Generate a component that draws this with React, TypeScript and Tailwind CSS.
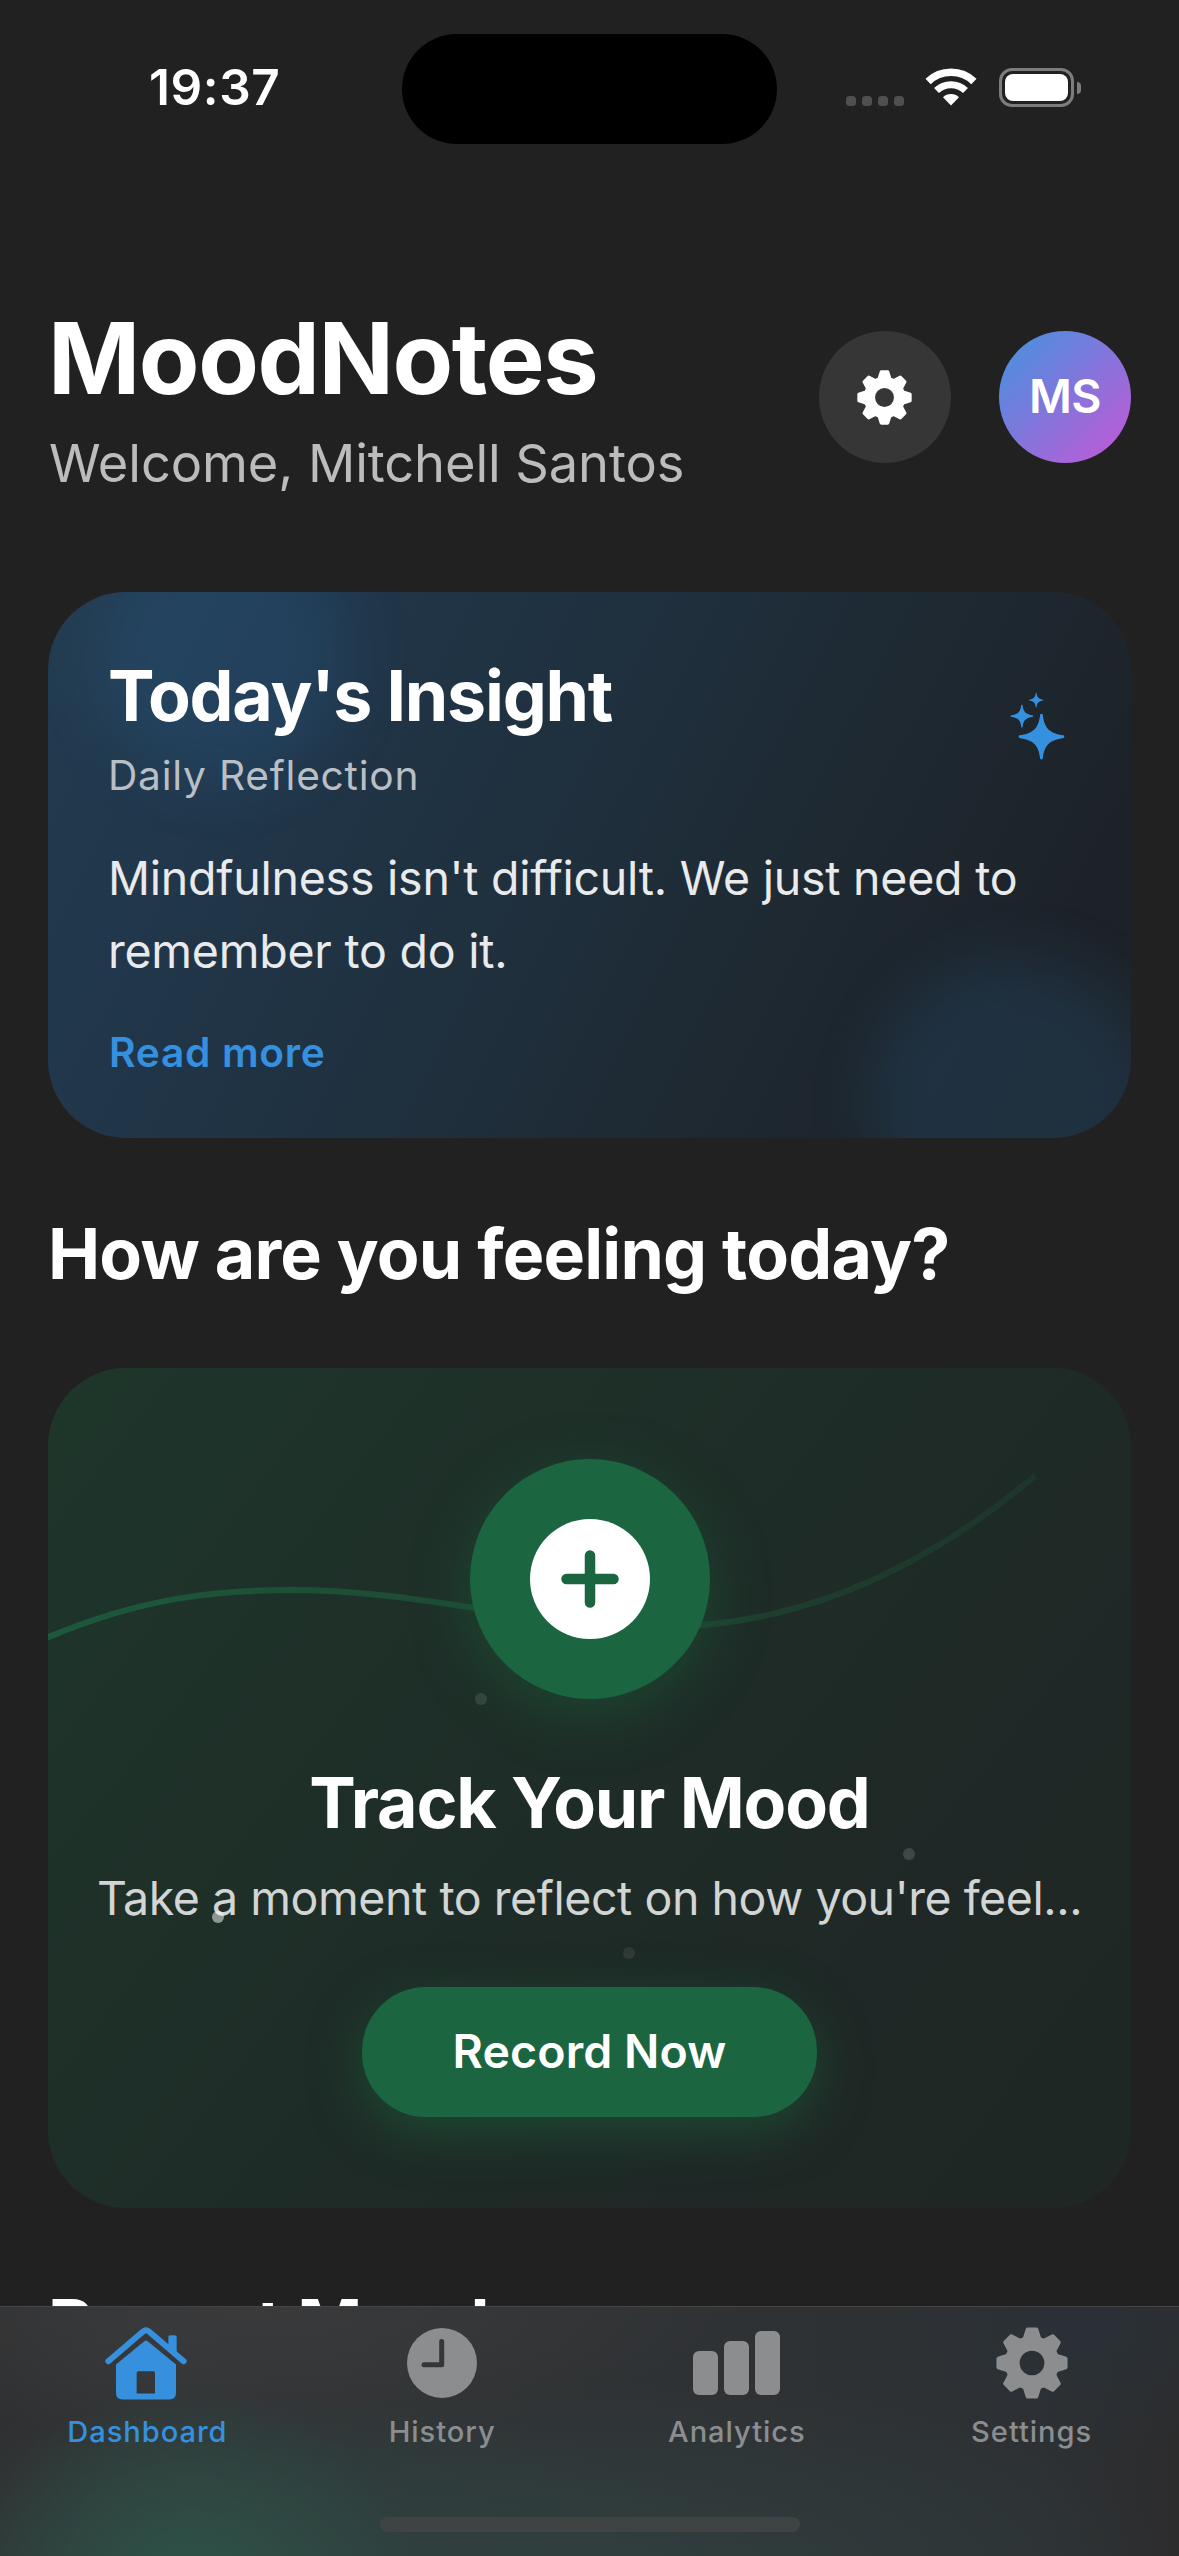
import type { ReactNode } from "react";

const TOOTH_ANGLES = [0, 45, 90, 135, 180, 225, 270, 315];
const STAR =
  "M-4 -67 Q0 -71 4 -67 C8 -25 25 -10 67 -4 Q71 0 67 4 C25 10 8 25 4 67 Q0 71 -4 67 C-8 25 -25 10 -67 4 Q-71 0 -67 -4 C-25 -10 -8 -25 -4 -67Z";

function GearIcon({ className }: { className: string }) {
  return (
    <svg viewBox="-83 -83 166 166" className={className}>
      <circle r="45.5" fill="none" stroke="currentColor" strokeWidth="34" />
      {TOOTH_ANGLES.map((a) => (
        <path
          key={a}
          d="M-18 -52 L-10 -77.5 L10 -77.5 L18 -52Z"
          transform={`rotate(${a})`}
          fill="currentColor"
          stroke="currentColor"
          strokeWidth="9"
          strokeLinejoin="round"
        />
      ))}
    </svg>
  );
}

function SparklesIcon() {
  return (
    <svg viewBox="148 97 166 204" className="mt-[38px] h-[68px] w-[55px] text-[#3690e0]" fill="currentColor">
      <path d={STAR} transform="translate(243 231)" />
      <path d={STAR} transform="translate(184 169) scale(0.5)" />
      <path d={STAR} transform="translate(227 121) scale(0.32)" />
    </svg>
  );
}

function HouseIcon() {
  return (
    <svg viewBox="44 50 246 218" className="mr-[3px] h-[73px] w-[82px]">
      <path
        d="M54 152 L158 63 Q167 56 176 63 L280 152"
        fill="none"
        stroke="currentColor"
        strokeWidth="18"
        strokeLinecap="round"
        strokeLinejoin="round"
      />
      <path d="M234 112 V80 Q234 74 240 74 H253 Q259 74 259 80 V132Z" fill="currentColor" />
      <path
        fillRule="evenodd"
        fill="currentColor"
        d="M162 92 Q167 88 172 92 L257 162 V247 Q257 267 237 267 H97 Q77 267 77 247 V162Z M144 182 Q139 182 139 187 V249 H194 V187 Q194 182 189 182Z"
      />
    </svg>
  );
}

function ClockIcon() {
  return (
    <svg viewBox="0 0 70 70" className="size-[70px]">
      <mask id="clock-hands">
        <rect width="70" height="70" fill="white" />
        <path d="M34.7 13.5 V36.7 H17" fill="none" stroke="black" strokeWidth="5" strokeLinecap="round" strokeLinejoin="round" />
      </mask>
      <circle cx="35" cy="35" r="35" fill="currentColor" mask="url(#clock-hands)" />
    </svg>
  );
}

function BarsIcon() {
  return (
    <div className="flex h-16 items-end gap-[6px]">
      <div className="h-11 w-[25px] rounded-[6px] bg-current" />
      <div className="h-[54px] w-[25px] rounded-[6px] bg-current" />
      <div className="h-16 w-[25px] rounded-[6px] bg-current" />
    </div>
  );
}

function WifiIcon() {
  return (
    <svg viewBox="-26 -37.5 52 38" className="mb-px h-[38px] w-[52px] text-white">
      <path d="M-22.9 -24.1 A33.2 33.2 0 0 1 22.9 -24.1" fill="none" stroke="currentColor" strokeWidth="7.6" />
      <path d="M-14.5 -14.9 A20.8 20.8 0 0 1 14.5 -14.9" fill="none" stroke="currentColor" strokeWidth="7" />
      <path d="M0 0 L-8 -8.2 A11.6 11.6 0 0 1 8 -8.2Z" fill="currentColor" />
    </svg>
  );
}

function StatusBar() {
  return (
    <div className="flex h-[178px] items-center">
      <div className="w-[402px] pb-[2px] pl-[149px] text-[49.5px] leading-none font-semibold tracking-[0.6px]">19:37</div>
      <div className="h-[110px] w-[375px] rounded-full bg-black" />
      <div className="mb-[3px] ml-[69px] flex h-[39px] items-end">
        <div className="mb-px flex gap-[6px]">
          <div className="size-[10px] rounded-[3.5px] bg-[#4f4f4f]" />
          <div className="size-[10px] rounded-[3.5px] bg-[#4f4f4f]" />
          <div className="size-[10px] rounded-[3.5px] bg-[#4f4f4f]" />
          <div className="size-[10px] rounded-[3.5px] bg-[#4f4f4f]" />
        </div>
        <div className="mr-[22px] ml-[21px]">
          <WifiIcon />
        </div>
        <div className="flex items-center gap-[3px]">
          <div className="h-[39px] w-[75px] rounded-[13px] border-3 border-[#7d7d7d] p-[3px]">
            <div className="h-full rounded-[8px] bg-white" />
          </div>
          <div className="h-3 w-1 rounded-r-full bg-[#7d7d7d]" />
        </div>
      </div>
    </div>
  );
}

function InsightCard() {
  return (
    <section className="relative mt-24 h-[546px] overflow-hidden rounded-[78px] bg-[linear-gradient(117deg,#233c50_0%,#21374b_18%,#1f303e_45%,#1e2830_70%,#1d2229_88%,#1d2228_100%)]">
      <div className="absolute -top-[66px] left-[44px] size-[260px] rounded-full bg-[#2f8fdd]/12 blur-[30px]" />
      <div className="absolute top-[366px] left-[822px] size-[290px] rounded-full bg-[#2f8fdd]/13 blur-[30px]" />
      <div className="relative pt-[62px] pr-[66px] pl-[60px]">
        <div className="flex h-[147px] justify-between">
          <div>
            <h2 className="text-[69.8px] leading-[84px] font-bold tracking-[-1.2px]">Today's Insight</h2>
            <p className="mt-3 text-[40.7px] leading-[51px] tracking-[0.75px] text-[#b9bfc5]">Daily Reflection</p>
          </div>
          <SparklesIcon />
        </div>
        <p className="mt-[41px] text-[46.5px] leading-[73px] tracking-[-0.24px] text-[#e8eaec]">
          Mindfulness isn't difficult. We just need to
          <br />
          remember to do it.
        </p>
        <p className="mt-[39px] ml-px text-[40.7px] leading-[51px] font-semibold tracking-[0.7px] text-[#3690e0]">Read more</p>
      </div>
    </section>
  );
}

function MoodCard() {
  return (
    <section className="relative mt-[72px] h-[840px] overflow-hidden rounded-[78px] bg-[linear-gradient(128deg,#1e362b_0%,#1e3129_25%,#1e2c27_50%,#1f2826_75%,#1f2725_100%)]">
      <svg viewBox="48 1368 1083 840" className="absolute inset-0 h-full w-full">
        <defs>
          <linearGradient id="wave" gradientUnits="userSpaceOnUse" x1="48" y1="0" x2="1034" y2="0">
            <stop offset="0" stopColor="#1c6740" stopOpacity="0.72" />
            <stop offset="1" stopColor="#1c6740" stopOpacity="0.18" />
          </linearGradient>
        </defs>
        <path
          d="M44 1639 C140 1598 215 1590 290 1590 C355 1590 410 1598 475 1608 S610 1630 690 1626 C832 1617 945 1551 1035 1476"
          fill="none"
          stroke="url(#wave)"
          strokeWidth="6"
        />
      </svg>
      <div className="relative flex flex-col items-center pt-[91px]">
        <div className="flex size-60 items-center justify-center rounded-full bg-[#1b6641] shadow-[0_15px_60px_rgba(27,102,62,0.45)]">
          <div className="flex size-[120px] items-center justify-center rounded-full bg-white">
            <svg viewBox="0 0 58 58" className="size-[58px]">
              <path d="M29 5.5 V52.5 M5.5 29 H52.5" stroke="#1b6641" strokeWidth="10.5" strokeLinecap="round" />
            </svg>
          </div>
        </div>
        <h2 className="mt-[62px] text-[69.8px] leading-[84px] font-bold tracking-[-1.17px]">Track Your Mood</h2>
        <p className="mt-6 text-[46.5px] leading-[58px] tracking-[-0.45px] whitespace-nowrap text-[#d2d5d4]">
          Take a moment to reflect on how you're feel...
        </p>
        <button className="mt-[60px] h-[130px] w-[455px] rounded-[64px] bg-[#1b6641] text-[46.5px] font-semibold tracking-[0.1px] shadow-[0_15px_50px_rgba(27,102,62,0.5)]">
          Record Now
        </button>
      </div>
      <div className="absolute top-[325px] left-[427px] size-3 rounded-full bg-white/10" />
      <div className="absolute top-[480px] left-[855px] size-3 rounded-full bg-white/15" />
      <div className="absolute top-[543px] left-[164px] size-3 rounded-full bg-white/50" />
      <div className="absolute top-[579px] left-[575px] size-3 rounded-full bg-white/8" />
    </section>
  );
}

function Tab({ label, active, children }: { label: string; active?: boolean; children: ReactNode }) {
  return (
    <div className={active ? "flex flex-1 flex-col items-center text-[#3690de]" : "flex flex-1 flex-col items-center text-[#8b8d8f]"}>
      <div className="flex h-[72px] items-center justify-center">{children}</div>
      <span className="mt-[13px] text-[29.1px] leading-10 font-medium tracking-[0.95px]">{label}</span>
    </div>
  );
}

export default function App() {
  return (
    <div className="flex h-[2556px] w-[1179px] flex-col overflow-hidden bg-[#212121] font-['Inter',sans-serif] text-white">
      <div className="h-[2306px] overflow-hidden">
        <StatusBar />
        <main className="mt-[120px] px-12">
          <header className="flex h-[198px] items-center">
            <div className="h-[198px] flex-1">
              <h1 className="text-[99px] leading-[120px] font-bold tracking-[-1.4px]">MoodNotes</h1>
              <p className="mt-[13px] ml-px text-[52.4px] leading-[64px] tracking-[-0.1px] text-[#bcbcbc]">Welcome, Mitchell Santos</p>
            </div>
            <div className="mr-12 flex size-[132px] items-center justify-center rounded-full bg-[#363636]">
              <GearIcon className="mr-px size-[55px] text-white" />
            </div>
            <div className="flex size-[132px] items-center justify-center rounded-full bg-[linear-gradient(135deg,#4194df_0%,#c656d7_100%)] text-[46.5px] font-semibold tracking-[-0.5px]">
              MS
            </div>
          </header>
          <InsightCard />
          <h2 className="mt-[74px] text-[69.8px] leading-[84px] font-bold tracking-[-0.8px]">How are you feeling today?</h2>
          <MoodCard />
          <h2 className="mt-[75px] text-[69.8px] leading-[84px] font-bold tracking-[-0.8px]">Recent Moods</h2>
        </main>
      </div>
      <nav className="h-[250px] border-t border-[#454545] bg-[radial-gradient(ellipse_230px_190px_at_190px_275px,#2d5348_0%,#2d534880_45%,#2d534800_100%),radial-gradient(ellipse_480px_180px_at_260px_270px,#2f413f_0%,#2f413f00_100%),radial-gradient(ellipse_500px_130px_at_250px_0px,#3a3a3b_0%,#3a3a3b00_100%),radial-gradient(ellipse_600px_200px_at_580px_270px,#303f3f_0%,#303f3f00_100%),radial-gradient(ellipse_200px_130px_at_1090px_20px,#2a3036_0%,#2a303600_100%),linear-gradient(90deg,#2f3031_0%,#313537_12%,#2f3234_50%,#2d3134_88%,#2c2c2d_100%)]">
        <div className="flex pt-5">
          <Tab label="Dashboard" active>
            <HouseIcon />
          </Tab>
          <Tab label="History">
            <ClockIcon />
          </Tab>
          <Tab label="Analytics">
            <BarsIcon />
          </Tab>
          <Tab label="Settings">
            <GearIcon className="size-[72px]" />
          </Tab>
        </div>
        <div className="mx-auto mt-[65px] h-[15px] w-[420px] rounded-full bg-[#404344]" />
      </nav>
    </div>
  );
}
